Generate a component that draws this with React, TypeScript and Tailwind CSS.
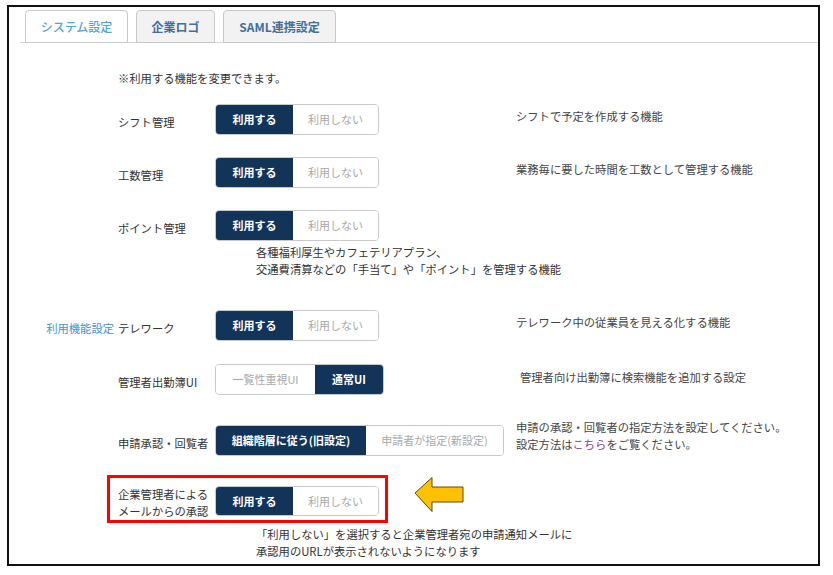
import React from "react";

const font = { fontFamily: '"Noto Sans CJK JP", "Noto Sans", sans-serif' };

function Seg({
  items,
}: {
  items: { label: string; active: boolean; w: string }[];
}) {
  return (
    <div className="flex h-[31px] rounded-[4px] border border-[#c9c9c9] overflow-hidden shrink-0">
      {items.map((it, i) => (
        <div
          key={i}
          className={
            (it.active
              ? "bg-[#133459] text-white font-bold "
              : "bg-white text-[#a8a8a8] ") +
            it.w +
            " flex items-center justify-center text-[11px]"
          }
        >
          {it.label}
        </div>
      ))}
    </div>
  );
}

const useNo = (w1 = "w-[77px]", w2 = "w-[85px]") => [
  { label: "利用する", active: true, w: w1 },
  { label: "利用しない", active: false, w: w2 },
];

function Row({
  section,
  label,
  seg,
  desc,
  descClass = "mt-[4px] ml-[516px]",
  className = "",
}: {
  section?: string;
  label: React.ReactNode;
  seg: React.ReactNode;
  desc?: React.ReactNode;
  descClass?: string;
  className?: string;
}) {
  return (
    <div className={"relative flex h-[31px] " + className}>
      <div className="w-[109px] shrink-0 text-right pr-[4px] pt-[10px] leading-[16px] text-[11.3px] text-[#4a91c9]">
        {section}
      </div>
      <div className="w-[97px] shrink-0 pt-[10px] leading-[16px] text-[11.3px] text-[#333]">
        {label}
      </div>
      {seg}
      {desc && (
        <div
          className={
            "absolute left-[-9px] top-0 whitespace-nowrap text-[11.3px] leading-[16px] text-[#444] " +
            descClass
          }
        >
          {desc}
        </div>
      )}
    </div>
  );
}

export default function App() {
  return (
    <div className="w-[833px] h-[575px] bg-white pl-[7px] pt-[5px]" style={font}>
      <div className="w-[813px] h-[561px] border-2 border-[#111] relative">
        {/* tabs */}
        <div className="mt-[3px] ml-[11px] flex gap-[8px] pl-[5px] border-b border-[#d4d4d4] h-[33px]">
          <div className="w-[103px] h-[33px] rounded-t-[4px] border border-[#c9c9c9] bg-white flex items-center justify-center text-[12px] font-medium text-[#52a3dc]">
            システム設定
          </div>
          <div className="w-[79px] h-[33px] rounded-t-[4px] border border-[#c9c9c9] bg-[#f2f2f2] flex items-center justify-center text-[12px] font-bold text-[#3f6f9e]">
            企業ロゴ
          </div>
          <div className="w-[113px] h-[33px] rounded-t-[4px] border border-[#c9c9c9] bg-[#f2f2f2] flex items-center justify-center text-[12px] font-bold text-[#3f6f9e]">
            SAML連携設定
          </div>
        </div>

        <div className="mt-[27px] ml-[109px] text-[11.3px] leading-[16px] text-[#333]">
          ※利用する機能を変更できます。
        </div>

        <Row
          className="mt-[18px]"
          label="シフト管理"
          seg={<Seg items={useNo()} />}
          desc="シフトで予定を作成する機能"
        />
        <Row
          className="mt-[22px]"
          label="工数管理"
          seg={<Seg items={useNo()} />}
          desc="業務毎に要した時間を工数として管理する機能"
        />
        <Row
          className="mt-[22px]"
          label="ポイント管理"
          seg={<Seg items={useNo()} />}
        />
        <div className="mt-[3px] ml-[247px] text-[11.3px] leading-[17px] text-[#333]">
          <div>各種福利厚生やカフェテリアプラン、</div>
          <div>交通費清算などの「手当て」や「ポイント」を管理する機能</div>
        </div>
        <Row
          className="mt-[32px]"
          section="利用機能設定"
          label="テレワーク"
          seg={<Seg items={useNo()} />}
          desc="テレワーク中の従業員を見える化する機能"
        />
        <Row
          className="mt-[23px]"
          label="管理者出勤簿UI"
          seg={
            <Seg
              items={[
                { label: "一覧性重視UI", active: false, w: "w-[99px]" },
                { label: "通常UI", active: true, w: "w-[68px]" },
              ]}
            />
          }
          desc="管理者向け出勤簿に検索機能を追加する設定"
          descClass="mt-[5px] ml-[520px]"
        />
        <Row
          className="mt-[30px]"
          label="申請承認・回覧者"
          seg={
            <Seg
              items={[
                { label: "組織階層に従う(旧設定)", active: true, w: "w-[150px]" },
                { label: "申請者が指定(新設定)", active: false, w: "w-[137px]" },
              ]}
            />
          }
          desc={
            <div className="leading-[17px]">
              <div>申請の承認・回覧者の指定方法を設定してください。</div>
              <div>
                設定方法は<span className="text-[#7b3fa0]">こちら</span>をご覧ください。
              </div>
            </div>
          }
          descClass="-mt-[6px] ml-[516px]"
        />

        {/* highlighted row */}
        <div className="relative mt-[19px] flex items-start">
          <div className="ml-[98px] w-[281px] h-[48px] border-[3px] border-[#ff0000] flex items-start pl-[8px] pt-[8px]">
            <div className="w-[97px] shrink-0 text-[11.3px] leading-[17px] text-[#333]">
              <div>企業管理者による</div>
              <div>メールからの承認</div>
            </div>
            <div className="h-[30px] flex rounded-[4px] border border-[#c9c9c9] overflow-hidden">
              <div className="w-[77px] bg-[#133459] text-white font-bold flex items-center justify-center text-[11px]">
                利用する
              </div>
              <div className="w-[85px] bg-white text-[#a8a8a8] flex items-center justify-center text-[11px]">
                利用しない
              </div>
            </div>
          </div>
          <svg
            className="absolute left-[405px] top-[2px]"
            width="52"
            height="36"
            viewBox="0 0 52 36"
          >
            <polygon
              points="1,16 18,0.5 18,10 49,10 49,25 18,25 18,34.5"
              fill="#ffc000"
              stroke="#5a4a10"
              strokeWidth="1"
            />
          </svg>
        </div>
        <div className="mt-[3px] ml-[247px] text-[11.3px] leading-[17px] text-[#333]">
          <div>「利用しない」を選択すると企業管理者宛の申請通知メールに</div>
          <div>承認用のURLが表示されないようになります</div>
        </div>
      </div>
    </div>
  );
}
